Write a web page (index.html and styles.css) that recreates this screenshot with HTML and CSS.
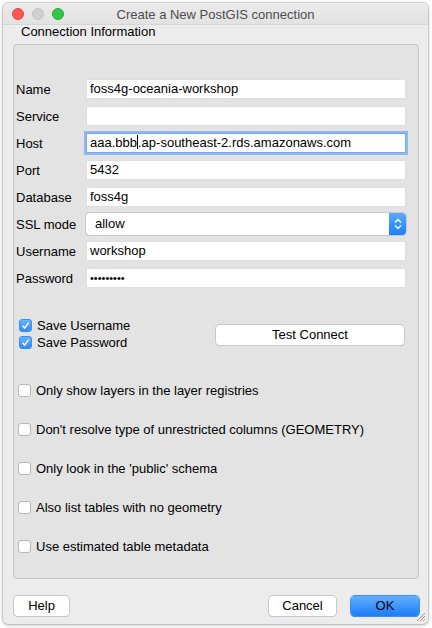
FILE: index.html
```html
<!DOCTYPE html>
<html>
<head>
<meta charset="utf-8">
<link rel="stylesheet" href="styles.css">
</head>
<body>
<div class="window">
  <div class="titlebar">
    <div class="lights">
      <span class="light red"></span>
      <span class="light gray"></span>
      <span class="light green"></span>
    </div>
    <div class="title">Create a New PostGIS connection</div>
  </div>
  <div class="content">
    <div class="group-label">Connection Information</div>
    <div class="group">
      <div class="form">
        <label>Name</label><div class="input">foss4g-oceania-workshop</div>
        <label>Service</label><div class="input"></div>
        <label>Host</label><div class="input focus">aaa.bbb<span class="caret"></span>.ap-southeast-2.rds.amazonaws.com</div>
        <label>Port</label><div class="input">5432</div>
        <label>Database</label><div class="input">foss4g</div>
        <label>SSL mode</label>
        <div class="combo"><span class="combo-text">allow</span><span class="combo-btn"><svg width="10" height="14" viewBox="0 0 10 14"><path d="M2 5.5 L5 2.5 L8 5.5" fill="none" stroke="#fff" stroke-width="1.4"/><path d="M2 8.5 L5 11.5 L8 8.5" fill="none" stroke="#fff" stroke-width="1.4"/></svg></span></div>
        <label>Username</label><div class="input">workshop</div>
        <label>Password</label><div class="input pw">•••••••••</div>
      </div>
      <div class="save-row">
        <div class="save-checks">
          <div class="check-line"><span class="cb on"><svg width="9" height="9" viewBox="0 0 9 9"><path d="M1.5 4.8 L3.7 7 L7.6 1.6" fill="none" stroke="#fff" stroke-width="1.5"/></svg></span>Save Username</div>
          <div class="check-line"><span class="cb on"><svg width="9" height="9" viewBox="0 0 9 9"><path d="M1.5 4.8 L3.7 7 L7.6 1.6" fill="none" stroke="#fff" stroke-width="1.5"/></svg></span>Save Password</div>
        </div>
        <div class="btn test">Test Connect</div>
      </div>
      <div class="options">
        <div class="check-line opt"><span class="cb"></span>Only show layers in the layer registries</div>
        <div class="check-line opt"><span class="cb"></span>Don't resolve type of unrestricted columns (GEOMETRY)</div>
        <div class="check-line opt"><span class="cb"></span>Only look in the 'public' schema</div>
        <div class="check-line opt"><span class="cb"></span>Also list tables with no geometry</div>
        <div class="check-line opt"><span class="cb"></span>Use estimated table metadata</div>
      </div>
    </div>
    <div class="buttons">
      <div class="btn help">Help</div>
      <div class="spacer"></div>
      <div class="btn cancel">Cancel</div>
      <div class="btn ok">OK</div>
    </div>
  </div>
  <svg class="grip" width="12" height="12" viewBox="0 0 12 12"><path d="M11 3 L3 11 M11 6 L6 11 M11 9 L9 11" stroke="#9a9a9a" stroke-width="1"/></svg>
</div>
</body>
</html>
```
FILE: styles.css
```css
* { box-sizing: border-box; }
html, body { margin: 0; padding: 0; background: #ffffff; }
body {
  font-family: "Liberation Sans", Arial, sans-serif;
  font-size: 13px;
  color: #000;
  padding: 3px 4px 4px 3px;
}
.window {
  position: relative;
  width: 425px;
  height: 621px;
  background: #ececec;
  border-radius: 5px;
  box-shadow: 0 0 0 1px rgba(0,0,0,0.12), 0 1px 4px rgba(0,0,0,0.25);
  display: flex;
  flex-direction: column;
  overflow: hidden;
}
.titlebar {
  height: 22px;
  display: flex;
  align-items: center;
  position: relative;
  background: linear-gradient(#ebebeb, #e2e2e2);
  border-bottom: 1px solid #d6d6d6;
}
.lights { display: flex; gap: 8px; padding-left: 9px; }
.light { width: 12px; height: 12px; border-radius: 50%; display: block; }
.light.red { background: #fc5753; border: 1px solid #df4744; }
.light.gray { background: #d0d0d0; border: 1px solid #c2c2c2; }
.light.green { background: #33c748; border: 1px solid #27aa35; }
.title {
  position: absolute;
  left: 0; right: 0; top: 0;
  line-height: 23px;
  text-align: center;
  color: #4d4d4d;
  font-size: 13px;
}
.content {
  flex: 1;
  display: flex;
  flex-direction: column;
  padding: 0 9px 0 10px;
}
.group-label {
  padding-left: 8px;
  height: 19px;
  line-height: 14px;
}
.group {
  height: 535px;
  border: 1px solid #c6c6c6;
  border-radius: 4px;
  background: #e3e3e3;
  padding: 34px 12px 0 2px;
}
.form {
  display: grid;
  grid-template-columns: 70px 1fr;
  row-gap: 7px;
  align-items: center;
}
.input {
  height: 20px;
  background: #fff;
  border: 1px solid #dedede;
  padding: 0 3px;
  line-height: 18px;
  white-space: nowrap;
  overflow: hidden;
}
.input.focus {
  box-shadow: 0 0 0 2px #8eb9f0;
  border-color: #7aa9e8;
  position: relative;
}
.caret { display: inline-block; width: 1px; height: 14px; background: #000; vertical-align: -2px; }
.input.pw { font-size: 11px; line-height: 18px; }
.combo {
  height: 22px;
  margin-top: -1px;
  margin-bottom: -1px;
  display: flex;
  background: #fff;
  border-radius: 4px;
  box-shadow: 0 0 0 1px #c8c8c8, 0 1px 0 #a9a9a9;
  overflow: hidden;
}
.combo-text { flex: 1; padding-left: 9px; line-height: 22px; }
.combo-btn {
  width: 17px;
  background: linear-gradient(#5aa9fd, #1e7ffb);
  display: flex;
  align-items: center;
  justify-content: center;
}
.save-row {
  display: flex;
  align-items: flex-start;
  margin-top: 29px;
  padding-left: 3px;
}
.save-checks { width: 197px; display: flex; flex-direction: column; }
.check-line { display: flex; align-items: center; height: 17px; gap: 5px; }
.cb {
  width: 13px; height: 13px;
  border-radius: 3px;
  background: #fff;
  border: 1px solid #b9b9b9;
  display: flex; align-items: center; justify-content: center;
  flex: none;
}
.cb.on { background: linear-gradient(#68b3fd, #2f8bfb); border-color: #3a8ef0; }
.btn {
  height: 20px;
  background: #fff;
  border-radius: 4px;
  box-shadow: 0 0 0 1px #c8c8c8, 0 1px 0 #b0b0b0;
  text-align: center;
  line-height: 20px;
}
.test { width: 188px; margin-top: 8px; }
.options { margin-top: 31px; padding-left: 2px; display: flex; flex-direction: column; gap: 22px; }
.buttons {
  display: flex;
  align-items: center;
  padding: 17px 0 0 1px;
  gap: 15px;
}
.spacer { flex: 1; }
.help { width: 55px; }
.cancel { width: 67px; }
.ok {
  width: 68px;
  background: linear-gradient(#62affd, #1b7cfa);
  box-shadow: 0 0 0 1px #3f8ef0, 0 1px 0 #2a6fd0;
  color: #000;
}
.grip { position: absolute; right: 2px; bottom: 2px; }
```
